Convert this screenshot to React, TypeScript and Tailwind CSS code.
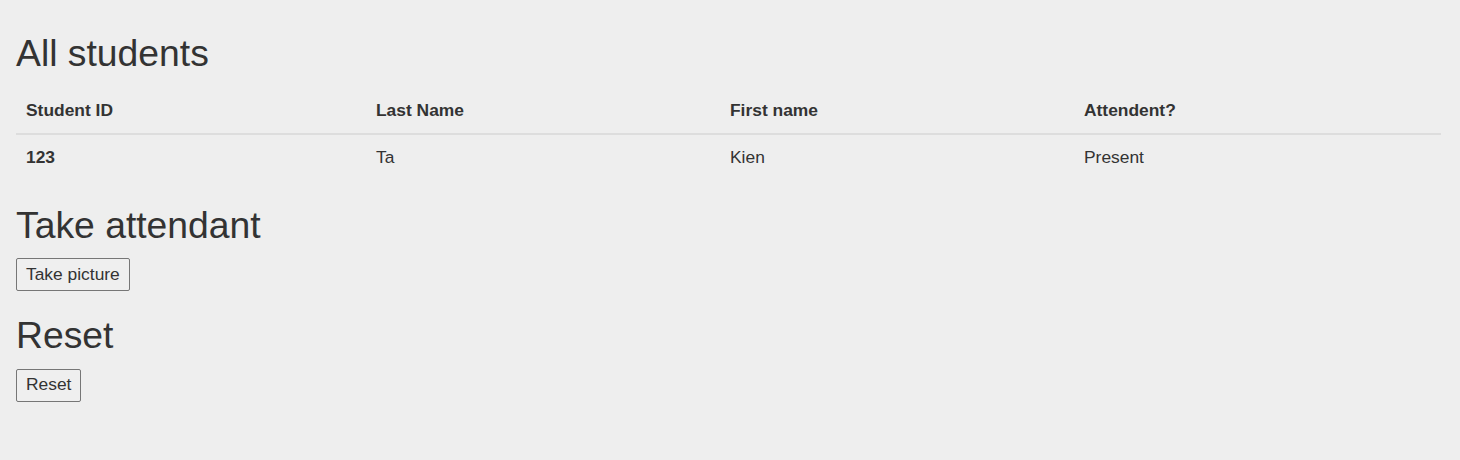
const students = [{ id: '123', last: 'Ta', first: 'Kien', status: 'Present' }]

export default function App() {
  return (
    <div className="min-h-screen bg-[#eeeeee] pt-[33px] pl-4 pr-[19px] font-['Liberation_Sans',Arial,sans-serif] text-[17.4px] leading-6 text-[#333333]">
      <h1 className="pt-[1px] text-[37.3px] leading-[39.6px]">All students</h1>
      <table className="mt-[14px] w-full border-collapse">
        <thead>
          <tr className="border-b-2 border-[#dddddd]">
            <th className="w-[350px] px-[10px] pt-[10px] pb-[11px] text-left font-bold">Student ID</th>
            <th className="w-[354px] px-[10px] pt-[10px] pb-[11px] text-left font-bold">Last Name</th>
            <th className="w-[354px] px-[10px] pt-[10px] pb-[11px] text-left font-bold">First name</th>
            <th className="px-[10px] pt-[10px] pb-[11px] text-left font-bold">Attendent?</th>
          </tr>
        </thead>
        <tbody>
          {students.map((s) => (
            <tr key={s.id}>
              <td className="p-[10px] font-bold">{s.id}</td>
              <td className="p-[10px]">{s.last}</td>
              <td className="p-[10px]">{s.first}</td>
              <td className="p-[10px]">{s.status}</td>
            </tr>
          ))}
        </tbody>
      </table>
      <h1 className="mt-[26px] pt-[1px] text-[37.3px] leading-[39.6px]">Take attendant</h1>
      <button
        type="button"
        className="mt-[13px] block rounded-[2px] border border-[#767676] bg-[#efefef] px-[9px] pt-[2.5px] pb-[4.5px] leading-6 text-[#333333]"
      >
        Take picture
      </button>
      <h1 className="mt-[24px] pt-[1px] text-[37.3px] leading-[39.6px]">Reset</h1>
      <button
        type="button"
        className="mt-[13px] block rounded-[2px] border border-[#767676] bg-[#efefef] px-[9px] pt-[2.5px] pb-[4.5px] leading-6 text-[#333333]"
      >
        Reset
      </button>
    </div>
  )
}
